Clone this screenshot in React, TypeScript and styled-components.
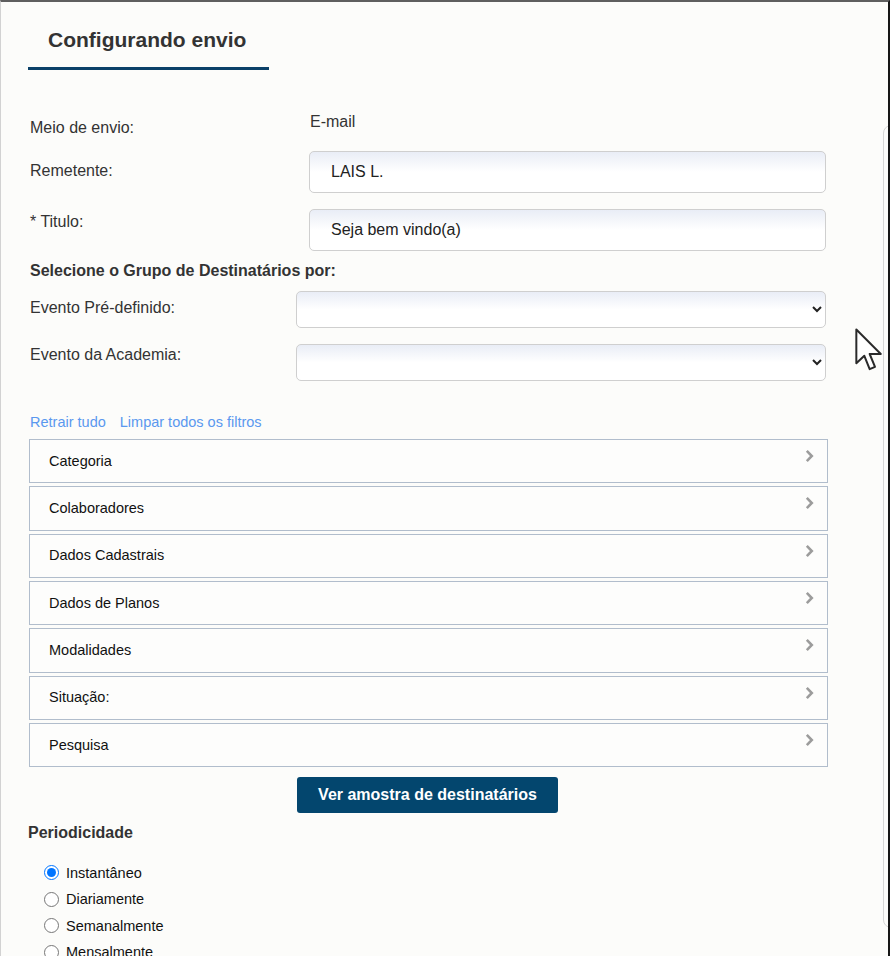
import React from "react";
import styled, { createGlobalStyle } from "styled-components";

const GlobalStyle = createGlobalStyle`
  html, body { margin: 0; padding: 0; background: #fcfcfa; }
  body { font-family: "Liberation Sans", Arial, sans-serif; }
  * { box-sizing: border-box; }
`;

const Frame = styled.div`
  position: relative;
  width: 890px;
  height: 956px;
  overflow: hidden;
  display: flex;
  background: #fcfcfa;
  border-top: 2px solid #5f5f5f;
  border-left: 1px solid #d2d2d2;
  border-right: 2px solid #161616;
`;

const Main = styled.div`
  flex: none;
  width: 827px;
  padding-left: 28px;
  display: flex;
  flex-direction: column;
`;

const SidePeek = styled.div`
  flex: none;
  width: 30px;
  height: 803px;
  margin-left: 55px;
  margin-top: 123px;
  border: 1px solid #d6d6d6;
  border-radius: 8px;
`;

const Tab = styled.h2`
  align-self: flex-start;
  width: 241px;
  margin: 0 0 0 -1px;
  padding: 26px 20px 15px;
  border-bottom: 3px solid #0b4068;
  font-size: 21px;
  line-height: 24px;
  font-weight: bold;
  color: #333;
`;

const FieldRow = styled.div<{ $gap: number }>`
  display: flex;
  align-items: flex-start;
  margin-top: ${(p) => p.$gap}px;
  margin-left: 1px;
`;

const Label = styled.label<{ $width: number; $padTop: number }>`
  flex: none;
  width: ${(p) => p.$width}px;
  padding-top: ${(p) => p.$padTop}px;
  font-size: 16px;
  line-height: 18px;
  color: #333;
`;

const Value = styled.span`
  font-size: 16px;
  line-height: 18px;
  color: #333;
`;

const TextInput = styled.input`
  width: 517px;
  height: 42px;
  padding: 0 0 0 21px;
  border: 1px solid #cfcfcf;
  border-radius: 5px;
  background: linear-gradient(#e9edf6 0%, #ffffff 50%);
  font-family: "Liberation Sans", Arial, sans-serif;
  font-size: 16px;
  color: #222;
  outline: none;
`;

const Select = styled.select`
  width: 530px;
  height: 37px;
  padding: 0 6px;
  border: 1px solid #cfcfcf;
  border-radius: 5px;
  background: linear-gradient(#e9edf6 0%, #ffffff 50%);
  font-family: "Liberation Sans", Arial, sans-serif;
  font-size: 15px;
  color: #222;
  outline: none;
`;

const SectionHeading = styled.div<{ $gap: number; $shift: number }>`
  margin-top: ${(p) => p.$gap}px;
  margin-left: ${(p) => p.$shift}px;
  font-size: 16px;
  line-height: 18px;
  font-weight: bold;
  color: #333;
`;

const LinkRow = styled.div`
  display: flex;
  gap: 14px;
  margin-top: 33px;
  margin-left: 1px;
`;

const TextLink = styled.a`
  font-size: 14.5px;
  line-height: 17px;
  color: #5a98ef;
  text-decoration: none;
  cursor: pointer;
`;

const AccordionList = styled.div`
  display: flex;
  flex-direction: column;
  gap: 3px;
  width: 799px;
  margin-top: 8px;
`;

const AccordionItem = styled.div`
  display: flex;
  justify-content: space-between;
  align-items: center;
  height: 44.33px;
  padding: 0 13px 0 19px;
  border: 1px solid #b1bdcc;
  background: #fdfdfc;
  font-size: 14.5px;
  line-height: 17px;
  color: #111;
`;

const Chevron = styled.svg`
  align-self: flex-start;
  margin-top: 9px;
  flex: none;
`;

const ButtonRow = styled.div`
  display: flex;
  justify-content: center;
  width: 797px;
  margin-top: 10px;
`;

const PrimaryButton = styled.button`
  width: 261px;
  height: 36px;
  border: none;
  border-radius: 3px;
  background: #03466e;
  color: #fff;
  font-family: "Liberation Sans", Arial, sans-serif;
  font-size: 16px;
  font-weight: bold;
  cursor: pointer;
`;

const RadioList = styled.div`
  display: flex;
  flex-direction: column;
  margin-top: 17px;
`;

const RadioRow = styled.label`
  display: flex;
  align-items: center;
  height: 26.6px;
  font-size: 14.5px;
  color: #111;
`;

const Radio = styled.input`
  width: 15px;
  height: 15px;
  margin: 0 7px 0 15px;
`;

const Cursor = styled.svg`
  position: absolute;
  left: 854px;
  top: 326px;
`;

const filters = [
  "Categoria",
  "Colaboradores",
  "Dados Cadastrais",
  "Dados de Planos",
  "Modalidades",
  "Situação:",
  "Pesquisa",
];

const periods = ["Instantâneo", "Diariamente", "Semanalmente", "Mensalmente"];

export default function App() {
  return (
    <>
      <GlobalStyle />
      <Frame>
        <Main>
          <Tab>Configurando envio</Tab>

          <FieldRow $gap={43}>
            <Label $width={280} $padTop={6}>Meio de envio:</Label>
            <Value>E-mail</Value>
          </FieldRow>

          <FieldRow $gap={14}>
            <Label $width={279} $padTop={11}>Remetente:</Label>
            <TextInput readOnly value="LAIS L." />
          </FieldRow>

          <FieldRow $gap={16}>
            <Label $width={279} $padTop={4}>* Titulo:</Label>
            <TextInput readOnly value="Seja bem vindo(a)" />
          </FieldRow>

          <SectionHeading $gap={11} $shift={1}>
            Selecione o Grupo de Destinatários por:
          </SectionHeading>

          <FieldRow $gap={11}>
            <Label $width={266} $padTop={8}>Evento Pré-definido:</Label>
            <Select defaultValue="">
              <option value=""></option>
            </Select>
          </FieldRow>

          <FieldRow $gap={16}>
            <Label $width={266} $padTop={2}>Evento da Academia:</Label>
            <Select defaultValue="">
              <option value=""></option>
            </Select>
          </FieldRow>

          <LinkRow>
            <TextLink>Retrair tudo</TextLink>
            <TextLink>Limpar todos os filtros</TextLink>
          </LinkRow>

          <AccordionList>
            {filters.map((f) => (
              <AccordionItem key={f}>
                <span>{f}</span>
                <Chevron width="9" height="14" viewBox="0 0 9 14">
                  <polyline
                    points="1.8,1.8 6.8,7 1.8,12.2"
                    fill="none"
                    stroke="#9c9c9c"
                    strokeWidth="2.6"
                  />
                </Chevron>
              </AccordionItem>
            ))}
          </AccordionList>

          <ButtonRow>
            <PrimaryButton>Ver amostra de destinatários</PrimaryButton>
          </ButtonRow>

          <SectionHeading $gap={11} $shift={-1}>
            Periodicidade
          </SectionHeading>

          <RadioList>
            {periods.map((p, i) => (
              <RadioRow key={p}>
                <Radio type="radio" name="periodo" defaultChecked={i === 0} />
                {p}
              </RadioRow>
            ))}
          </RadioList>
        </Main>
        <SidePeek />
        <Cursor width="28" height="44" viewBox="0 0 12.6 19.6">
          <path
            d="M0.6 0.6 L0.6 15.8 L4.2 12.4 L6.6 18.4 L9 17.4 L6.6 11.6 L11.6 11.6 Z"
            fill="#ffffff"
            stroke="#2a2a2a"
            strokeWidth="0.9"
            strokeLinejoin="round"
          />
        </Cursor>
      </Frame>
    </>
  );
}
